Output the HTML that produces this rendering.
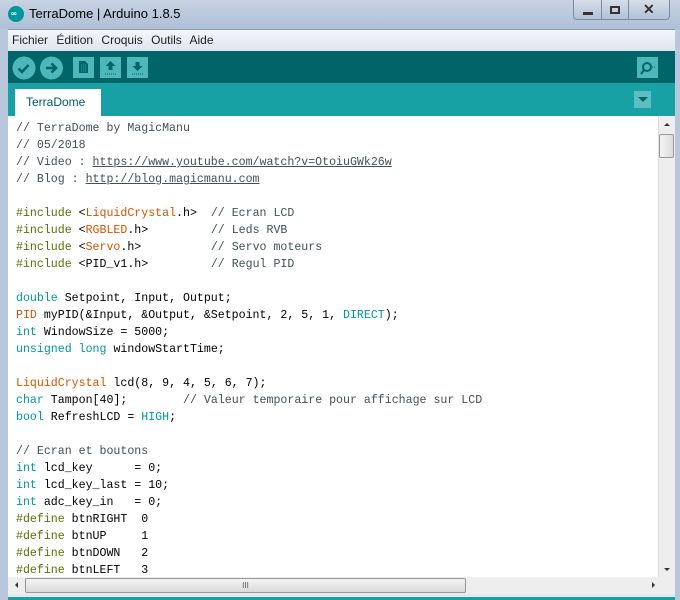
<!DOCTYPE html>
<html><head><meta charset="utf-8"><style>
*{margin:0;padding:0;box-sizing:border-box}
body{width:680px;height:600px;overflow:hidden;background:#b9c7dc;position:relative;font-family:"Liberation Sans",sans-serif}
.abs{position:absolute}
#title{left:0;top:0;width:680px;height:29px;background:linear-gradient(#c8d3e3,#aebfd6)}
#menu{left:8px;top:29px;width:667px;height:22px;background:linear-gradient(#f4f6fa,#dfe5ef);border-top:1px solid #8a9ab0;font-size:12px;color:#1e1e1e}
#menu span{margin-right:5px}
#tool{left:8px;top:51px;width:667px;height:32px;background:#006468}
#tabs{left:8px;top:83px;width:667px;height:33px;background:#17a1a5}
#tab{left:15px;top:89px;width:86px;height:27px;background:#fff;font-size:12px;color:#005c5f;padding:6px 0 0 11px}
#ed{left:8px;top:116px;width:650px;height:461px;background:#fff;overflow:hidden}
pre{font-family:"Liberation Mono",monospace;font-size:11.6px;line-height:17px;color:#000;position:absolute;left:8px;top:4px}
.c{color:#434f54}.o{color:#d35400}.t{color:#00979c}.d{color:#5e6d03}.u{text-decoration:underline;color:#434f54}
</style></head><body>
<div id="title" class="abs"></div>
<div class="abs" style="left:8px;top:6px;width:16px;height:16px;border-radius:50%;background:#00979c"></div>
<div class="abs" style="left:11px;top:10px;width:10px;height:8px;color:#fff;font-size:8px;line-height:8px;font-weight:bold">∞</div>
<div class="abs" style="left:29px;top:6px;font-size:13px;color:#000">TerraDome | Arduino 1.8.5</div>
<div class="abs" style="left:573px;top:0;width:97px;height:20px;border:1px solid #7d8aa0;border-top:none;border-radius:0 0 4px 4px;background:linear-gradient(#d6deea,#b3c1d6)"></div>
<div class="abs" style="left:601px;top:0;width:1px;height:20px;background:#7d8aa0"></div>
<div class="abs" style="left:628px;top:0;width:1px;height:20px;background:#7d8aa0"></div>
<div class="abs" style="left:583px;top:12px;width:10px;height:3px;background:#333"></div>
<div class="abs" style="left:610px;top:6px;width:10px;height:8px;border:2px solid #333"></div>
<div class="abs" style="left:643px;top:1px;font-size:14px;font-weight:bold;color:#333">✕</div>
<div id="menu" class="abs"><div style="padding:3px 0 0 4px"><span>Fichier</span> <span>Édition</span> <span>Croquis</span> <span>Outils</span> <span>Aide</span></div></div>
<div id="tool" class="abs"></div>
<svg class="abs" style="left:0;top:51px" width="680" height="32">
<circle cx="24" cy="17" r="11.5" fill="#4db7bb"/>
<path d="M18.5 17.5l3.5 3.5l6.5-7" stroke="#006468" stroke-width="2.6" fill="none"/>
<circle cx="51.5" cy="17" r="11.5" fill="#4db7bb"/>
<path d="M46 17h9M51.5 12.5l4.5 4.5l-4.5 4.5" stroke="#006468" stroke-width="2.6" fill="none"/>
<rect x="73" y="6" width="21" height="21" fill="#4db7bb"/>
<path d="M79 10h6l3 3v9h-9z" fill="#006468"/>
<path d="M81 14h5M81 16h5M81 18h5M81 20h5" stroke="#4db7bb" stroke-width="0.8" stroke-dasharray="1 1"/>
<rect x="100" y="6" width="21" height="21" fill="#4db7bb"/>
<path d="M110.5 10l-5 5h3v4h4v-4h3z" fill="#006468"/><path d="M105 23h11" stroke="#006468" stroke-dasharray="1 1"/>
<rect x="127" y="6" width="21" height="21" fill="#4db7bb"/>
<path d="M137.5 20l-5-5h3v-4h4v4h3z" fill="#006468"/><path d="M132 23h11" stroke="#006468" stroke-dasharray="1 1"/>
<rect x="637" y="6" width="21" height="21" fill="#4db7bb"/>
<circle cx="647" cy="16" r="4" stroke="#006468" stroke-width="2" fill="none"/>
<path d="M644 19l-3 4" stroke="#006468" stroke-width="2"/><path d="M652 16h3" stroke="#006468" stroke-dasharray="1 1"/>
</svg>
<div id="tabs" class="abs"></div>
<div id="tab" class="abs">TerraDome</div>
<div class="abs" style="left:634px;top:91px;width:17px;height:17px;background:#5cbec1"></div>
<div class="abs" style="left:638px;top:97px;width:0;height:0;border-left:5px solid transparent;border-right:5px solid transparent;border-top:5px solid #006468"></div>
<div id="ed" class="abs"><pre><span class="c">// TerraDome by MagicManu
// 05/2018
// Video : <span class="u">https://www.youtube.com/watch?v=OtoiuGWk26w</span>
// Blog : <span class="u">http://blog.magicmanu.com</span></span>

<span class="d">#include</span> &lt;<span class="o">LiquidCrystal</span>.h&gt;  <span class="c">// Ecran LCD</span>
<span class="d">#include</span> &lt;<span class="o">RGBLED</span>.h&gt;         <span class="c">// Leds RVB</span>
<span class="d">#include</span> &lt;<span class="o">Servo</span>.h&gt;          <span class="c">// Servo moteurs</span>
<span class="d">#include</span> &lt;PID_v1.h&gt;         <span class="c">// Regul PID</span>

<span class="t">double</span> Setpoint, Input, Output;
<span class="o">PID</span> myPID(&amp;Input, &amp;Output, &amp;Setpoint, 2, 5, 1, <span class="t">DIRECT</span>);
<span class="t">int</span> WindowSize = 5000;
<span class="t">unsigned</span> <span class="t">long</span> windowStartTime;

<span class="o">LiquidCrystal</span> lcd(8, 9, 4, 5, 6, 7);
<span class="t">char</span> Tampon[40];        <span class="c">// Valeur temporaire pour affichage sur LCD</span>
<span class="t">bool</span> RefreshLCD = <span class="t">HIGH</span>;

<span class="c">// Ecran et boutons</span>
<span class="t">int</span> lcd_key      = 0;
<span class="t">int</span> lcd_key_last = 10;
<span class="t">int</span> adc_key_in   = 0;
<span class="d">#define</span> btnRIGHT  0
<span class="d">#define</span> btnUP     1
<span class="d">#define</span> btnDOWN   2
<span class="d">#define</span> btnLEFT   3</pre></div>
<div class="abs" style="left:658px;top:116px;width:17px;height:461px;background:#eeeeee;border-left:1px solid #ddd"></div>
<div class="abs" style="left:664px;top:123px;width:0;height:0;border-left:3px solid transparent;border-right:3px solid transparent;border-bottom:3px solid #333"></div>
<div class="abs" style="left:659px;top:134px;width:15px;height:24px;background:linear-gradient(90deg,#f4f4f4,#dcdcdc);border:1px solid #999;border-radius:2px"></div>
<div class="abs" style="left:664px;top:568px;width:0;height:0;border-left:3px solid transparent;border-right:3px solid transparent;border-top:3px solid #333"></div>
<div class="abs" style="left:8px;top:577px;width:667px;height:17px;background:#eeeeee"></div>
<div class="abs" style="left:25px;top:578px;width:441px;height:15px;background:linear-gradient(#f4f4f4,#dadada);border:1px solid #999;border-radius:2px;font-size:8px;text-align:center;color:#555;line-height:13px">III</div>
<div class="abs" style="left:15px;top:582px;width:0;height:0;border-top:3px solid transparent;border-bottom:3px solid transparent;border-right:3px solid #333"></div>
<div class="abs" style="left:652px;top:582px;width:0;height:0;border-top:3px solid transparent;border-bottom:3px solid transparent;border-left:3px solid #333"></div>
<div class="abs" style="left:8px;top:594px;width:667px;height:3px;background:#e8e8e8"></div>
<div class="abs" style="left:8px;top:597px;width:667px;height:3px;background:#17a1a5"></div>
</body></html>
